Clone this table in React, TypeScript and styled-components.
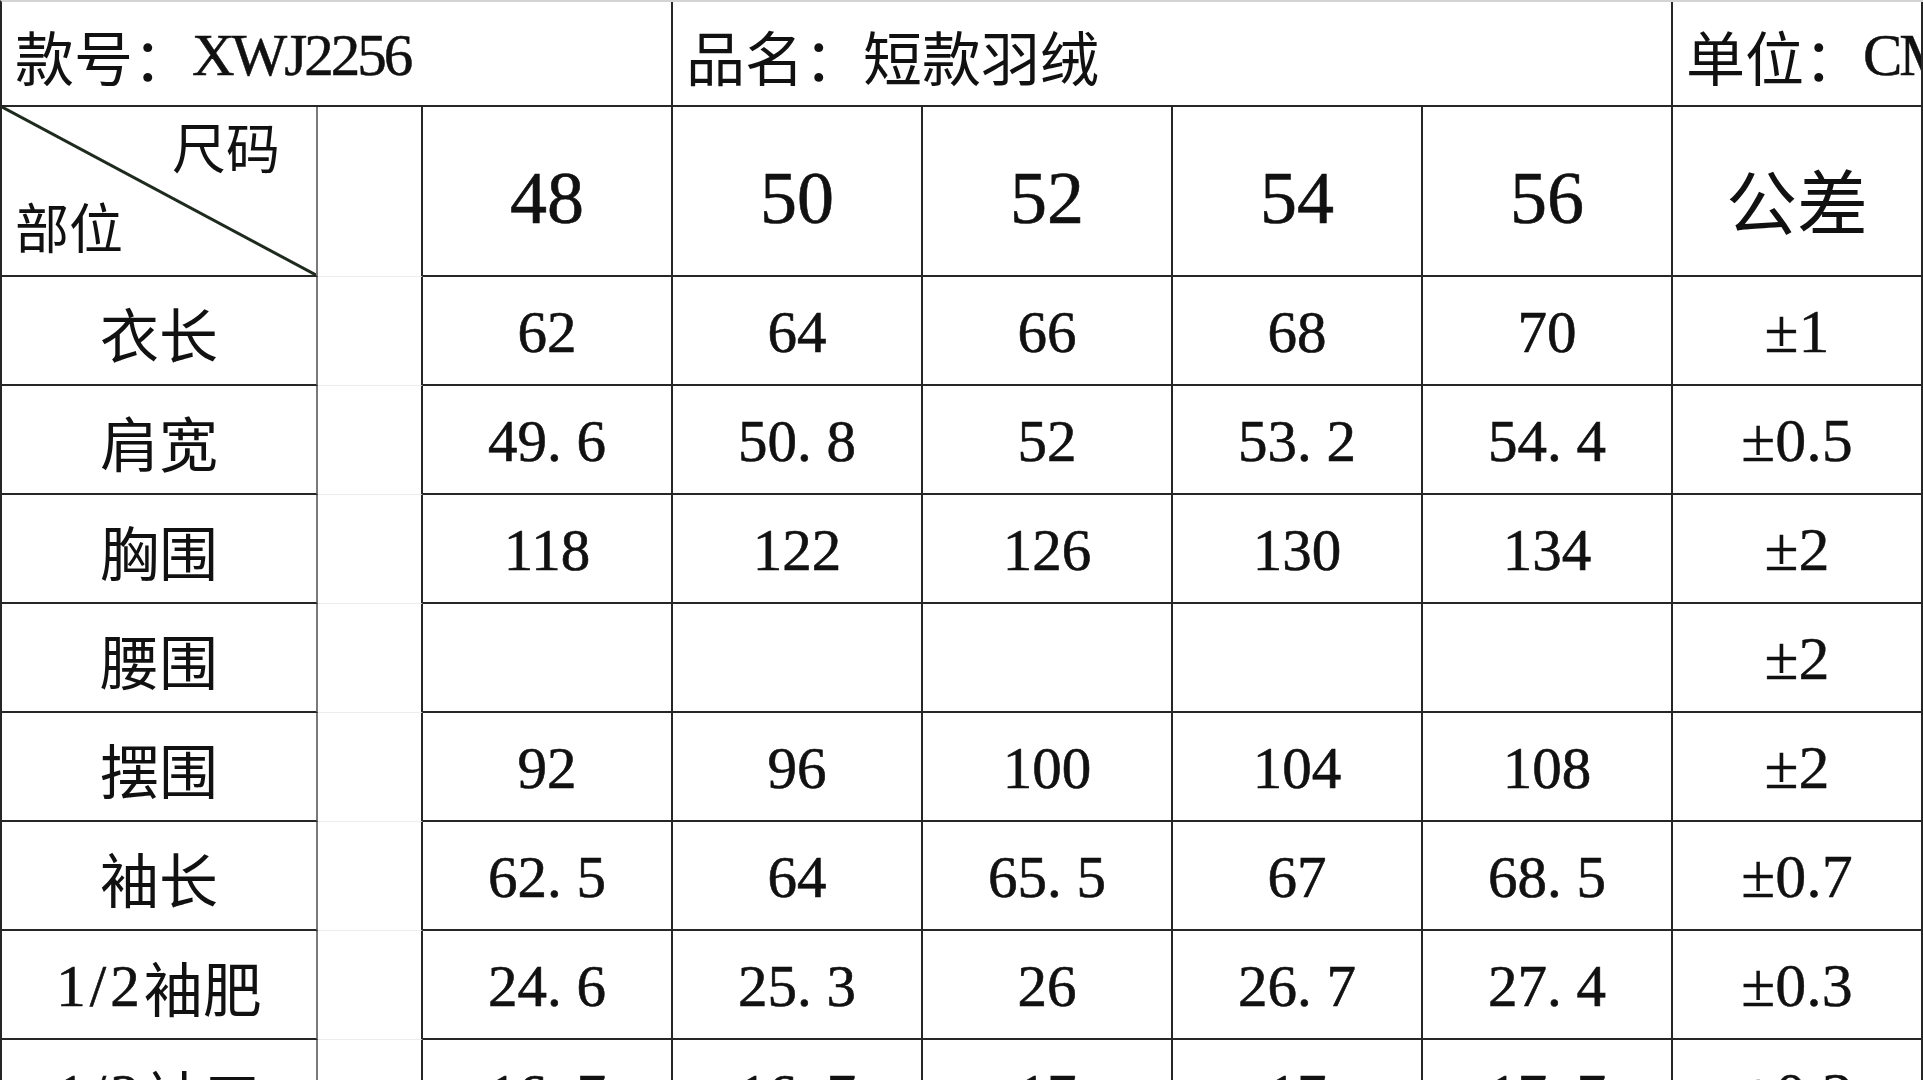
import React from 'react';
import styled, { createGlobalStyle } from 'styled-components';

const GlobalStyle = createGlobalStyle`
  html, body {
    margin: 0;
    padding: 0;
    background: #fff;
    overflow: hidden;
  }
`;

const LINE = '#262626';
const SERIF = '"Liberation Serif", "Noto Sans CJK SC", serif';
const CJK = '"Noto Sans CJK SC", sans-serif';

const Sheet = styled.div`
  display: grid;
  grid-template-columns: 316px 105px repeat(6, 250px);
  grid-template-rows: 105px 170px repeat(8, 109px);
  width: 1923px;
  height: 1080px;
  box-sizing: border-box;
  border-left: 2px solid ${LINE};
  border-top: 2px solid #d4d4d4;
  overflow: hidden;
  background: #fff;
  color: #111;
`;

const Cell = styled.div`
  box-sizing: border-box;
  border-right: 2px solid ${LINE};
  border-bottom: 2px solid ${LINE};
  display: flex;
  align-items: center;
  justify-content: center;
  overflow: hidden;
  white-space: nowrap;
`;

const TitleCell = styled(Cell)<{ $span: number }>`
  grid-column: span ${(p) => p.$span};
  justify-content: flex-start;
  padding: 4px 0 0 13px;
  font-family: ${SERIF};
  font-size: 59px;
  letter-spacing: -3px;
  -webkit-text-stroke: 0.5px #111;
`;

const Cjk = styled.span`
  font-family: ${CJK};
  letter-spacing: 0;
  -webkit-text-stroke: 0;
`;

const CornerCell = styled(Cell)`
  border-right-color: #7a7a7a;
  flex-direction: column;
  align-items: stretch;
  justify-content: space-between;
  padding: 4px 0 14px 0;
  background: linear-gradient(
    to top right,
    transparent calc(50% - 2px),
    #1d2a1d calc(50% - 1px),
    #1d2a1d calc(50% + 1px),
    transparent calc(50% + 2px)
  );
  font-family: ${CJK};
  font-size: 54px;
  line-height: 1.3;
`;

const CornerText = styled.span<{ $side: 'left' | 'right' }>`
  align-self: ${(p) => (p.$side === 'right' ? 'flex-end' : 'flex-start')};
  padding: ${(p) => (p.$side === 'right' ? '0 36px 0 0' : '0 0 0 13px')};
`;

const SpacerCell = styled(Cell)<{ $last?: boolean }>`
  border-bottom: 1px solid ${(p) => (p.$last ? 'transparent' : '#ececec')};
`;

const HeadCell = styled(Cell)<{ $cjk?: boolean }>`
  padding-top: 14px;
  font-family: ${(p) => (p.$cjk ? CJK : SERIF)};
  font-size: ${(p) => (p.$cjk ? '71px' : '74px')};
  -webkit-text-stroke: ${(p) => (p.$cjk ? '0' : '0.6px #111')};
`;

const LabelCell = styled(Cell)`
  border-right-color: #7a7a7a;
  padding-top: 4px;
  font-family: ${CJK};
  font-size: 59px;
`;

const Fraction = styled.span`
  font-family: ${SERIF};
  letter-spacing: 4px;
  -webkit-text-stroke: 0.6px #111;
`;

const ValueCell = styled(Cell)`
  padding-top: 4px;
  font-family: ${SERIF};
  font-size: 59px;
  -webkit-text-stroke: 0.6px #111;
`;

const TolCell = styled(Cell)`
  padding-top: 2px;
  font-family: ${SERIF};
  font-size: 62px;
  -webkit-text-stroke: 0.4px #111;
`;

const Dot = styled.span`
  display: inline-block;
  width: 0.5em;
  text-align: left;
`;

const Num = ({ v }: { v: string }) => {
  const [a, b] = v.split('.');
  if (b === undefined) return <>{a}</>;
  return (
    <>
      {a}
      <Dot>.</Dot>
      {b}
    </>
  );
};

const Label = ({ text }: { text: string }) => {
  const m = text.match(/^([0-9/]+)(.*)$/);
  if (!m) return <>{text}</>;
  return (
    <>
      <Fraction>{m[1]}</Fraction>
      {m[2]}
    </>
  );
};

const sizes = ['48', '50', '52', '54', '56'];

const rows: { label: string; values: string[]; tol: string }[] = [
  { label: '衣长', values: ['62', '64', '66', '68', '70'], tol: '±1' },
  { label: '肩宽', values: ['49.6', '50.8', '52', '53.2', '54.4'], tol: '±0.5' },
  { label: '胸围', values: ['118', '122', '126', '130', '134'], tol: '±2' },
  { label: '腰围', values: ['', '', '', '', ''], tol: '±2' },
  { label: '摆围', values: ['92', '96', '100', '104', '108'], tol: '±2' },
  { label: '袖长', values: ['62.5', '64', '65.5', '67', '68.5'], tol: '±0.7' },
  { label: '1/2袖肥', values: ['24.6', '25.3', '26', '26.7', '27.4'], tol: '±0.3' },
  { label: '1/2袖口', values: ['16.7', '16.7', '17', '17', '17.7'], tol: '±0.3' },
];

const App = () => (
  <>
    <GlobalStyle />
    <Sheet>
      <TitleCell $span={3}>
        <Cjk>款号：</Cjk>XWJ2256
      </TitleCell>
      <TitleCell $span={4}>
        <Cjk>品名：短款羽绒</Cjk>
      </TitleCell>
      <TitleCell $span={1}>
        <Cjk>单位：</Cjk>CM
      </TitleCell>

      <CornerCell>
        <CornerText $side="right">尺码</CornerText>
        <CornerText $side="left">部位</CornerText>
      </CornerCell>
      <SpacerCell />
      {sizes.map((s) => (
        <HeadCell key={s}>{s}</HeadCell>
      ))}
      <HeadCell $cjk>公差</HeadCell>

      {rows.map((r, i) => (
        <React.Fragment key={r.label}>
          <LabelCell>
            <Label text={r.label} />
          </LabelCell>
          <SpacerCell $last={i === rows.length - 1} />
          {r.values.map((v, j) => (
            <ValueCell key={j}>
              <Num v={v} />
            </ValueCell>
          ))}
          <TolCell>{r.tol}</TolCell>
        </React.Fragment>
      ))}
    </Sheet>
  </>
);

export default App;
